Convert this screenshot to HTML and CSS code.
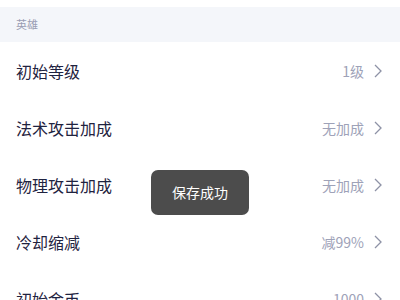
FILE: index.html
```html
<!DOCTYPE html>
<html lang="zh-CN">
  <head>
    <meta charset="UTF-8" />
    <meta name="viewport" content="width=device-width, initial-scale=1.0" />
    <title>设置</title>
    <link rel="stylesheet" href="styles.css">
  </head>

  <body>
    <div class="page">
      <div class="group-title">英雄</div>

      <ul class="cell-list">
        <li class="cell">
          <span class="cell-label">初始等级</span>
          <span class="cell-value">1级</span>
          <svg class="arrow" viewBox="0 0 8 14"><path d="M1 1l6 6-6 6" /></svg>
        </li>
        <li class="cell">
          <span class="cell-label">法术攻击加成</span>
          <span class="cell-value">无加成</span>
          <svg class="arrow" viewBox="0 0 8 14"><path d="M1 1l6 6-6 6" /></svg>
        </li>
        <li class="cell">
          <span class="cell-label">物理攻击加成</span>
          <span class="cell-value">无加成</span>
          <svg class="arrow" viewBox="0 0 8 14"><path d="M1 1l6 6-6 6" /></svg>
        </li>
        <li class="cell">
          <span class="cell-label">冷却缩减</span>
          <span class="cell-value">减99%</span>
          <svg class="arrow" viewBox="0 0 8 14"><path d="M1 1l6 6-6 6" /></svg>
        </li>
        <li class="cell">
          <span class="cell-label">初始金币</span>
          <span class="cell-value">1000</span>
          <svg class="arrow" viewBox="0 0 8 14"><path d="M1 1l6 6-6 6" /></svg>
        </li>
      </ul>
    </div>

    <div class="toast">保存成功</div>
  </body>
</html>
```

FILE: styles.css
```css
body {
  font-family: "Noto Sans CJK SC", "Noto Sans", sans-serif;
  margin: 0;
  background-color: #ffffff;
  color: #1f2340;
  overflow: hidden;
}

.page {
  padding-top: 7px;
}

.group-title {
  height: 35px;
  line-height: 35px;
  padding: 0 16px;
  font-size: 11px;
  color: #9a9db3;
  background-color: #f4f6fa;
}

.cell-list {
  list-style: none;
  margin: 0;
  padding: 0;
}

.cell {
  display: flex;
  align-items: center;
  height: 57px;
  padding: 0 18px 0 16px;
}

.cell-label {
  flex: 1;
  font-size: 16px;
  color: #1f2340;
}

.cell-value {
  font-size: 14px;
  color: #9ea2b8;
}

.arrow {
  width: 8px;
  height: 14px;
  margin-left: 10px;
  fill: none;
  stroke: #8e92a6;
  stroke-width: 1.3;
}

.toast {
  position: absolute;
  left: 151px;
  top: 170px;
  width: 98px;
  height: 45px;
  line-height: 45px;
  text-align: center;
  font-size: 14px;
  color: #ffffff;
  background-color: #4c4c4c;
  border-radius: 7px;
}
```
